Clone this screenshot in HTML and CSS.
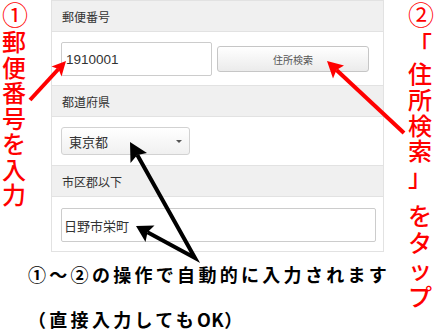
FILE: index.html
```html
<!DOCTYPE html>
<html lang="ja">
<head>
<meta charset="utf-8">
<link rel="stylesheet" href="styles.css">
</head>
<body>
<div class="page">
  <div class="note note-left">
    <span class="c c-first">①</span>
    <span class="c">郵</span>
    <span class="c">便</span>
    <span class="c">番</span>
    <span class="c">号</span>
    <span class="c">を</span>
    <span class="c">入</span>
    <span class="c">力</span>
  </div>

  <div class="panel">
    <div class="sec-head">郵便番号</div>
    <div class="sec-body row-zip">
      <div class="field field-zip">1910001</div>
      <div class="btn">住所検索</div>
    </div>
    <div class="sec-head">都道府県</div>
    <div class="sec-body row-pref">
      <div class="select"><span>東京都</span><i class="caret"></i></div>
    </div>
    <div class="sec-head">市区郡以下</div>
    <div class="sec-body row-city">
      <div class="field field-city">日野市栄町</div>
    </div>
  </div>

  <div class="note note-right">
    <span class="r r-num">②</span>
    <span class="r r-open">「</span>
    <span class="r r-k">住</span>
    <span class="r r-k">所</span>
    <span class="r r-k">検</span>
    <span class="r r-k">索</span>
    <span class="r r-close">」</span>
    <span class="r r-t r-gap">を</span>
    <span class="r r-t">タ</span>
    <span class="r r-t">ッ</span>
    <span class="r r-t">プ</span>
  </div>

  <div class="caption">
    <div class="cap-line">①〜②の操作で自動的に入力されます</div>
    <div class="cap-line">（直接入力しても<span class="latin">OK</span>）</div>
  </div>

  <svg class="arrows" width="436" height="330" viewBox="0 0 436 330">
    <line x1="30" y1="100" x2="58.5" y2="69" stroke="#ff0000" stroke-width="4"/>
    <polygon points="66,61 61.5,76.5 58.5,69 51.5,66.5" fill="#ff0000"/>
    <line x1="404" y1="133" x2="336.5" y2="70" stroke="#ff0000" stroke-width="4"/>
    <polygon points="327,61 344,65.5 336.5,70 333,78.5" fill="#ff0000"/>
    <path d="M137.3,155.1 L195,258 L147.5,232.2" fill="none" stroke="#000" stroke-width="4" stroke-linejoin="miter" stroke-miterlimit="10"/>
    <polygon points="130,142 147,153 137.3,155.1 130.5,163" fill="#000"/>
    <polygon points="136,226 154.5,225.5 147.5,232.2 145.5,242" fill="#000"/>
  </svg>
</div>
</body>
</html>
```

FILE: styles.css
```css
* { box-sizing: border-box; }
html, body { margin: 0; padding: 0; background: #fff; }
body { width: 436px; height: 330px; overflow: hidden; }

.page {
  position: relative;
  width: 436px;
  height: 330px;
  display: grid;
  grid-template-columns: 51px 333px 1fr;
  grid-template-rows: auto auto;
  font-family: "Liberation Sans", "Noto Sans CJK JP", sans-serif;
}

/* annotations */
.note {
  display: flex;
  flex-direction: column;
  color: #ff0000;
  font-family: "Noto Sans CJK JP", sans-serif;
  font-weight: 500;
  font-size: 24px;
}
.note-left { grid-column: 1; grid-row: 1; padding-left: 2px; }
.note-right { grid-column: 3; grid-row: 1 / 3; padding-left: 24px; }
.c, .r { display: block; width: 24px; text-align: center; }
.c { line-height: 25.5px; }
.c-first { line-height: 28px; font-weight: 400; font-size: 26px; }
.r-num { line-height: 27px; font-weight: 400; font-size: 26px; }
.r-open { line-height: 33px; text-align: left; }
.r-k { line-height: 25.8px; }
.r-close { line-height: 26px; text-align: right; }
.r-t { line-height: 27px; }
.r-gap { margin-top: 12px; }

/* panel */
.panel {
  grid-column: 2;
  grid-row: 1;
  border: 1px solid #e2e2e2;
  border-bottom: 0;
  font-family: "Noto Sans CJK JP", sans-serif;
}
.sec-head {
  height: 31px;
  background: #f0f0f0;
  border-bottom: 1px solid #e2e2e2;
  padding-left: 10px;
  display: flex;
  align-items: center;
  font-size: 12px;
  color: #333;
}
.sec-body {
  background: #fff;
  border-bottom: 1px solid #e2e2e2;
  padding: 10px 7px 9px 9px;
  display: flex;
  align-items: center;
}
.row-pref { padding-bottom: 10px; }
.row-city { padding-top: 11px; }

.field {
  height: 34px;
  border: 1px solid #cccccc;
  border-radius: 2px;
  background: #fff;
  display: flex;
  align-items: center;
  color: #333;
  font-size: 13px;
}
.field-zip {
  width: 151px;
  padding-left: 4px;
  font-family: "Liberation Sans", sans-serif;
  font-size: 13.5px;
}
.field-city {
  width: 315px;
  padding-left: 2px;
  font-family: "Noto Sans CJK JP", sans-serif;
}

.btn {
  margin-left: 5px;
  width: 152px;
  height: 26px;
  border: 1px solid #c6c6c6;
  border-radius: 3px;
  background: linear-gradient(#ffffff, #ebebeb);
  display: flex;
  align-items: center;
  justify-content: center;
  font-size: 10px;
  color: #555;
}

.select {
  width: 129px;
  height: 28px;
  border: 1px solid #d2d2d2;
  border-radius: 3px;
  background: linear-gradient(#ffffff, #f0f0f0);
  display: flex;
  align-items: center;
  justify-content: space-between;
  padding: 0 7px 0 7px;
  font-size: 13px;
  color: #333;
}
.caret {
  width: 0;
  height: 0;
  border-left: 3px solid transparent;
  border-right: 3px solid transparent;
  border-top: 3px solid #555;
}

/* caption */
.caption {
  grid-column: 1 / 3;
  grid-row: 2;
  padding-left: 28px;
  white-space: nowrap;
  font-family: "Noto Sans CJK JP", sans-serif;
  font-weight: 700;
  font-size: 18px;
  letter-spacing: 3.3px;
  line-height: 45px;
  color: #000;
}
.latin { letter-spacing: 0.5px; }

.arrows {
  position: absolute;
  left: 0;
  top: 0;
  pointer-events: none;
}
```
